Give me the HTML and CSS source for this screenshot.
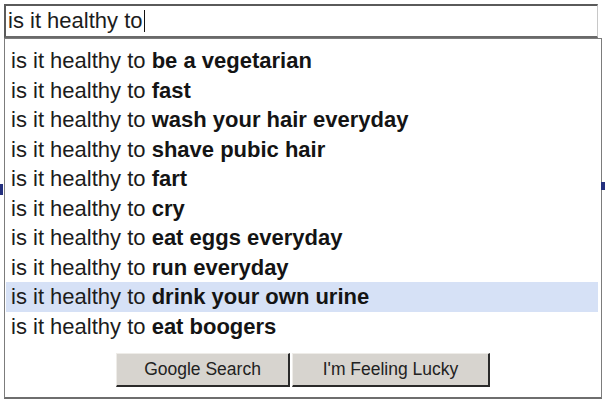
FILE: index.html
```html
<!DOCTYPE html>
<html lang="en">
<head>
  <meta charset="UTF-8" />
  <title>is it healthy to</title>
  <link rel="stylesheet" href="styles.css">
</head>
<body>
  <!-- bits of the page behind the dropdown -->
  <span class="peek peek-left"></span>
  <span class="peek peek-right"></span>

  <div class="search">
    <div class="query">is it healthy to<span class="caret"></span></div>

    <div class="drop">
      <ul class="suggest">
        <li>is it healthy to <b>be a vegetarian</b></li>
        <li>is it healthy to <b>fast</b></li>
        <li>is it healthy to <b>wash your hair everyday</b></li>
        <li>is it healthy to <b>shave pubic hair</b></li>
        <li>is it healthy to <b>fart</b></li>
        <li>is it healthy to <b>cry</b></li>
        <li>is it healthy to <b>eat eggs everyday</b></li>
        <li>is it healthy to <b>run everyday</b></li>
        <li class="active">is it healthy to <b>drink your own urine</b></li>
        <li>is it healthy to <b>eat boogers</b></li>
      </ul>

      <div class="buttons">
        <button class="btn gs">Google Search</button>
        <button class="btn lucky">I'm Feeling Lucky</button>
      </div>
    </div>
  </div>
</body>
</html>
```

FILE: styles.css
```css
body { margin: 0; background: #fff; font-family: "Liberation Sans", Arial, sans-serif; color: #1c1c1c; }
.search { width: 598px; margin: 4px 0 0 4px; }
.query { height: 30px; border-style: solid; border-width: 2px 1px 2px 2px; border-color: #5a5a5a #c8c8c8 #6a6a6a #5a5a5a; width: 589px; font-size: 22px; line-height: 30px; padding-left: 2px; }
.caret { display: inline-block; width: 1px; height: 22px; background: #111; vertical-align: -4px; margin-left: 1px; }
.drop { border: 1px solid #7c7c7c; border-bottom: 2px solid #6e6e6e; padding: 7px 3px 10px 1px; }
.suggest { list-style: none; margin: 0; padding: 0; }
.suggest li { font-size: 22px; line-height: 29.5px; height: 29.5px; padding-left: 5px; white-space: nowrap; }
.suggest li b { color: #141414; }
.suggest li.active { background: #d6e1f6; }
.buttons { display: flex; justify-content: center; gap: 2px; margin-top: 12px; padding-left: 2px; }
.btn { height: 34px; font-family: "Liberation Sans", Arial, sans-serif; font-size: 17.5px; color: #222; background: #d7d4cf; border-style: solid; border-width: 1px 2px 2px 1px; border-color: #eeece8 #2a2a2a #2a2a2a #eeece8; padding: 0; }
.gs { width: 174px; }
.lucky { width: 198px; }
.peek { position: absolute; background: #24307e; }
.peek-left { left: 0; top: 184px; width: 3px; height: 11px; }
.peek-right { left: 601px; top: 182px; width: 4px; height: 8px; }
```
